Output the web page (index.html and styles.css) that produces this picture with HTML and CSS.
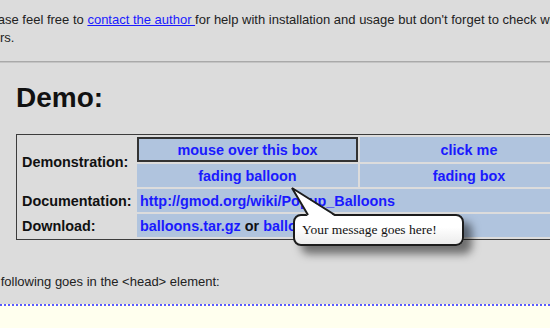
FILE: index.html
```html
<!DOCTYPE html>
<html>
<head>
<meta charset="utf-8">
<title>Popup Balloons</title>
<link rel="stylesheet" href="styles.css">
</head>
<body>
<div class="page">
  <p class="intro">Please feel free to <a class="link" href="#">contact the author </a>for help with installation and usage but don't forget to check with other<br>users.</p>
  <hr class="rule">
  <h2 class="title">Demo:</h2>
  <div class="demo">
    <div class="label span2">Demonstration:</div>
    <div class="cell hover">mouse over this box</div>
    <div class="cell">click me</div>
    <div class="cell">fading balloon</div>
    <div class="cell">fading box</div>
    <div class="label">Documentation:</div>
    <div class="cell wide"><a class="blue" href="#">http://gmod.org/wiki/Popup_Balloons</a></div>
    <div class="label">Download:</div>
    <div class="cell wide"><a class="blue" href="#">balloons.tar.gz</a> or <a class="blue" href="#">balloons.zip</a></div>
  </div>
  <p class="note">the following goes in the &lt;head&gt; element:</p>
</div>
<pre class="code"></pre>
<div class="balloon">Your message goes here!</div>
<svg class="tail" width="50" height="34" viewBox="0 0 50 34">
  <polygon points="2,2 18,31 46,31" fill="#ffffff"/>
  <polyline points="18,29 2,2 45,29" fill="none" stroke="#1c1c1c" stroke-width="2" stroke-linejoin="miter"/>
</svg>
</body>
</html>
```
FILE: styles.css
```css
html, body {
  margin: 0;
  padding: 0;
}
body {
  background: #dcdcdc;
  font-family: "Liberation Sans", Arial, sans-serif;
  font-size: 13px;
  color: #222;
  overflow: hidden;
  width: 550px;
  height: 328px;
  position: relative;
}
.page {
  margin-left: -21px;
}
.intro {
  margin: 11px 0 0 0;
  line-height: 18px;
  white-space: nowrap;
}
.link {
  color: #1a1aff;
  text-decoration: underline;
}
.rule {
  margin: 14px 0 0 0;
  height: 0;
  border: 0;
  border-top: 1px solid #a9a9a9;
  border-bottom: 1px solid #c4c4c4;
}
.title {
  margin: 19px 0 0 37px;
  font-size: 28px;
  line-height: 32px;
  font-weight: bold;
  color: #111;
}
.demo {
  margin: 20px 0 0 37px;
  display: grid;
  grid-template-columns: 116px 221px 218px;
  grid-template-rows: 25px 23px 23px 23px;
  gap: 2px;
  padding: 2px;
  border: 1px solid #3c3c3c;
  width: max-content;
  background: #dcdcdc;
}
.label {
  display: flex;
  align-items: center;
  padding-left: 3px;
  font-weight: bold;
  font-size: 14.4px;
  color: #111;
}
.span2 {
  grid-row: span 2;
}
.cell {
  background: #b0c4de;
  display: flex;
  align-items: center;
  justify-content: center;
  font-weight: bold;
  font-size: 14.4px;
  color: #1a1aff;
  box-sizing: border-box;
}
.hover {
  border: 2px solid #333;
}
.wide {
  grid-column: span 2;
  justify-content: flex-start;
  padding-left: 3px;
  color: #111;
  white-space: pre;
}
.blue {
  color: #1a1aff;
  text-decoration: none;
}
.note {
  margin: 33px 0 0 0;
  line-height: 18px;
}
.code {
  margin: 13px 0 0 0;
  height: 40px;
  background: #ffffee;
  border-top: 2px dotted #5a5aff;
}
.balloon {
  position: absolute;
  left: 293px;
  top: 214px;
  width: 171px;
  height: 32px;
  box-sizing: border-box;
  border: 2px solid #1c1c1c;
  border-radius: 8px;
  background: linear-gradient(#ffffff 40%, #ececec);
  box-shadow: 8px 8px 8px rgba(0, 0, 0, 0.5);
  font-family: "Liberation Serif", "Times New Roman", serif;
  font-size: 13.5px;
  color: #111;
  padding-left: 7px;
  line-height: 28px;
}
.tail {
  position: absolute;
  left: 290px;
  top: 186px;
}
```
